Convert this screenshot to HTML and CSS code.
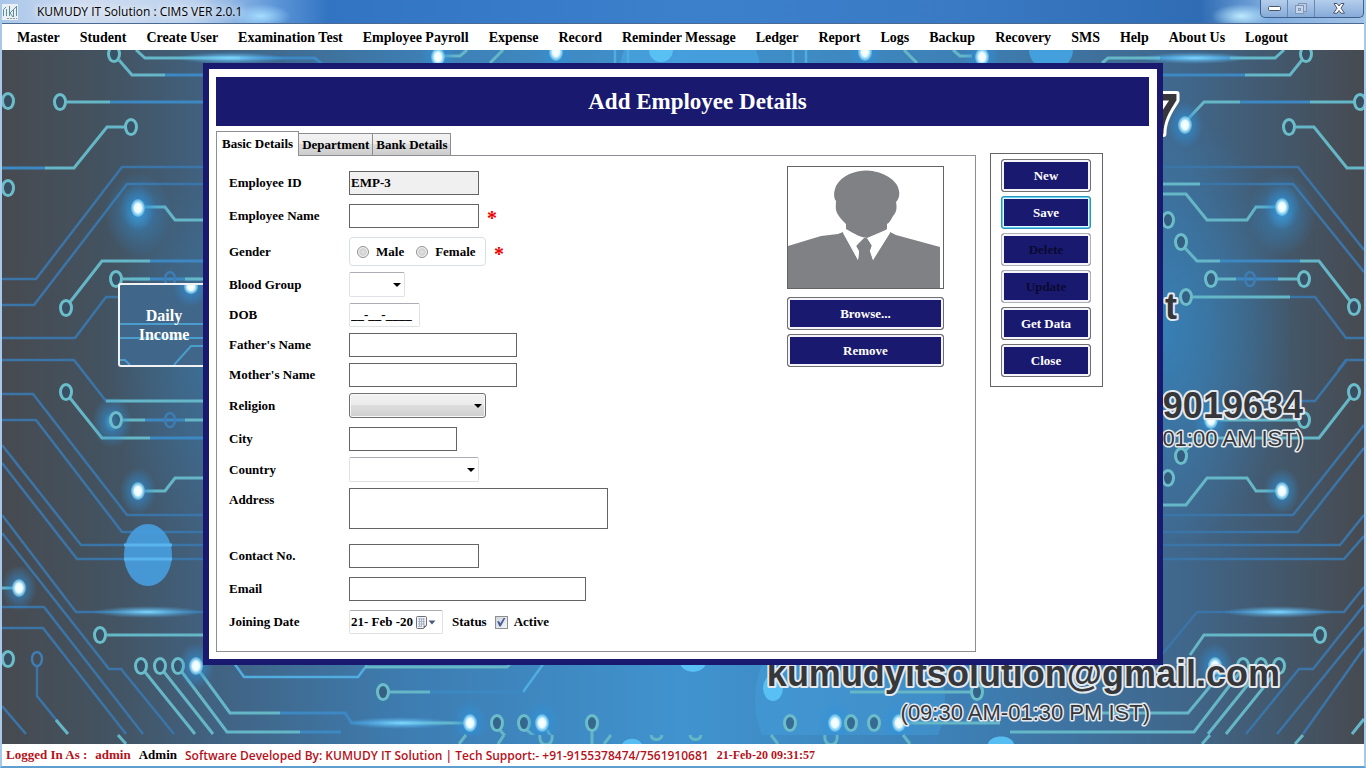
FILE: index.html
```html
<!DOCTYPE html>
<html lang="en">
<head>
    <meta charset="UTF-8">
    <meta name="viewport" content="width=device-width, initial-scale=1.0">
    <title>KUMUDY IT Solution : CIMS VER 2.0.1</title>
    <link rel="stylesheet" href="styles.css">
</head>
<body>
    <header class="titlebar">
        <svg class="app-icon" viewBox="0 0 16 16" width="16" height="16" aria-hidden="true">
            <rect width="16" height="16" fill="#e9eff2"/>
            <path d="M1.5 12V5.500L4 3M4.500 5v7M7.500 2v10M14 3L8 9l3 4M11.500 6v7M14.500 2v10" fill="none" stroke="#5d8f9c" stroke-width="1"/>
            <path d="M5 14.500h10" stroke="#8a9aa0" stroke-dasharray="2 1"/>
        </svg>
        <span class="window-title">KUMUDY IT Solution : CIMS VER 2.0.1</span>
        <div class="window-buttons">
            <button aria-label="Minimize">
                <svg viewBox="0 0 13 6" width="13" height="6"><rect x=".5" y=".5" width="12" height="4" rx="1" fill="#fff" stroke="#4a5468"/></svg>
            </button>
            <button aria-label="Restore" disabled>
                <svg viewBox="0 0 12 12" width="12" height="12" fill="none" stroke="#8296b4"><rect x="3.500" y=".5" width="8" height="8" fill="#b9cce6"/><rect x=".5" y="2.500" width="8" height="8" fill="#c6d6ea"/><rect x="3.500" y="5.500" width="2" height="2"/></svg>
            </button>
            <button class="close" aria-label="Close window">
                <svg viewBox="0 0 12 11" width="12" height="11"><path d="M1 .5h3l2 2.500 2-2.500h3L8 5.200l3.500 5H8L6 7.500l-2 2.700H.5L4 5.200z" fill="#fff" stroke="#4a5468"/></svg>
            </button>
        </div>
    </header>

    <nav class="menu">
        <a href="#">Master</a>
        <a href="#">Student</a>
        <a href="#">Create User</a>
        <a href="#">Examination Test</a>
        <a href="#">Employee Payroll</a>
        <a href="#">Expense</a>
        <a href="#">Record</a>
        <a href="#">Reminder Message</a>
        <a href="#">Ledger</a>
        <a href="#">Report</a>
        <a href="#">Logs</a>
        <a href="#">Backup</a>
        <a href="#">Recovery</a>
        <a href="#">SMS</a>
        <a href="#">Help</a>
        <a href="#">About Us</a>
        <a href="#">Logout</a>
    </nav>

    <main class="desktop">
        <svg class="wallpaper" viewBox="2 50 1362 694" preserveAspectRatio="xMidYMid slice">
            <defs>
                <linearGradient id="sky" x1="0" x2="1" y1="0" y2="0">
                    <stop offset="0" stop-color="#474a50"/>
                    <stop offset=".08" stop-color="#435361"/>
                    <stop offset=".15" stop-color="#41617f"/>
                    <stop offset=".3" stop-color="#3d7db2"/>
                    <stop offset=".5" stop-color="#4093cf"/>
                    <stop offset=".7" stop-color="#3d80b6"/>
                    <stop offset=".87" stop-color="#40668a"/>
                    <stop offset=".94" stop-color="#43576a"/>
                    <stop offset="1" stop-color="#474a50"/>
                </linearGradient>
                <radialGradient id="side">
                    <stop offset="0" stop-color="#3585be" stop-opacity=".8"/>
                    <stop offset="1" stop-color="#3585be" stop-opacity="0"/>
                </radialGradient>
                <radialGradient id="glow">
                    <stop offset="0" stop-color="#4fb9f5" stop-opacity=".9"/>
                    <stop offset=".4" stop-color="#2f93dc" stop-opacity=".5"/>
                    <stop offset="1" stop-color="#2f93dc" stop-opacity="0"/>
                </radialGradient>
                <radialGradient id="flare">
                    <stop offset="0" stop-color="#7fd6ff"/>
                    <stop offset="1" stop-color="#4fb0ee" stop-opacity="0"/>
                </radialGradient>
                <radialGradient id="lamp">
                    <stop offset="0" stop-color="#fff"/>
                    <stop offset=".5" stop-color="#e8fbff"/>
                    <stop offset="1" stop-color="#72d0f5" stop-opacity=".5"/>
                </radialGradient>
                <g id="ring"><ellipse rx="5.500" ry="7.500" fill="#30506a" fill-opacity=".6" stroke="#6bbdca" stroke-width="3"/></g>
                <g id="dim"><ellipse rx="5" ry="7" fill="none" stroke="#3d7db3" stroke-width="2.500"/></g>
                <g id="light"><ellipse rx="18" ry="23" fill="url(#glow)"/><ellipse rx="7" ry="9" fill="url(#lamp)"/></g>
            </defs>

            <rect x="0" y="50" width="1366" height="694" fill="url(#sky)"/>
            <ellipse cx="215" cy="350" rx="110" ry="190" fill="url(#side)" opacity=".5"/>
            <ellipse cx="1165" cy="330" rx="130" ry="220" fill="url(#side)"/>
            <ellipse cx="690" cy="70" rx="70" ry="60" fill="#4aa7e4" opacity=".6"/>
            <circle cx="850" cy="700" r="95" fill="#45a3e2" opacity=".4"/>

            <g fill="none" stroke="#3b75a8" stroke-width="2.500">
                <path d="M210 167H122L36 279H2M210 184H127L34 305H2M118 297H106L75 338H2M2 360H74L106 401H210"/>
                <path d="M2 394H33L127 515H210M2 420H36L122 532H210M2 445L81 545H210M2 463L77 559H210"/>
                <path d="M2 515L76 612H210M2 533L109 669H121L174 734M2 607H44L143 734M2 628H43L126 734M37 666V696L58 722M2 706L26 734"/>
                <path d="M1160 167H1298L1364 250M1160 184H1293L1364 272M1290 297H1315L1346 338H1364M1338 370L1346 360H1364M1160 401H1315L1346 361"/>
                <path d="M1160 515H1293L1364 425M1160 532H1298L1364 448M1160 545H1340L1364 515M1160 559H1344L1364 536"/>
                <path d="M1160 657L1197 612H1344L1364 587M1364 605L1313 669H1299L1246 734M1364 627L1277 734M1364 648L1303 734"/>
                <path d="M234 663L244 677H358L367 665M523 692L544 663M615 50V63M628 50V63M793 50V63M806 50V63" stroke="#51ace0"/>
            </g>

            <g fill="none" stroke="#3d88c2" stroke-width="3">
                <path d="M240 58H315L322 64M165 75H210M110 102H210M45 168H2M150 261H210M130 279H200M150 438H210M145 420H185"/>
                <path d="M280 713H345L352 723H400M300 732H341M430 692H523M1160 75H1245M1160 58H1230M1240 102H1310M1220 261H1300M1236 279H1278"/>
            </g>

            <g fill="none" stroke="#65b6c6" stroke-width="3">
                <path d="M119 60L132 75H165M136 50L145 58H240M67 102H110M125 127H107L74 168H45M145 207H165L175 220H210M70 302L102 261H150M123 279H150M185 279H210"/>
                <path d="M70 398L102 438H150M106 401H210M123 420H145M185 420H210M145 491H165L175 478H210M2 588H15M107 635H210M56 720L68 734"/>
                <path d="M145 672L195 734M164 672L213 734M182 672L227 732H300M200 672L230 713H280M390 692H430M365 667H507L511 663M400 723H464"/>
                <path d="M1230 58H1275L1284 50M1302 60L1290 75H1245M1188 119L1204 102H1240M1310 102H1354M1296 127H1314L1347 168H1364M1160 184H1200M1160 194H1186L1207 220H1247L1256 207H1276"/>
                <path d="M1185 248L1197 261H1220M1300 261H1319L1350 301M1218 279H1236M1278 279H1298M1193 297H1290M1350 398L1319 438H1197L1185 451M1218 420H1298M1160 505H1186L1207 478H1247L1256 491H1276"/>
                <path d="M1190 655L1204 635H1313M1080 713H1188L1222 672M1010 732H1194L1240 672M1208 734L1258 672M1226 734L1276 672M1352 734L1364 719M850 692H970M905 723H1000"/>
                <path d="M444 56H460L467 50M490 63L503 50M972 56H960L953 50M917 63L904 50M1102 63L1108 58H1160M500 730L505 736M527 730L534 736M592 730V744M547 730L552 738"/>
            </g>

            <ellipse cx="148" cy="612" rx="55" ry="6" fill="url(#flare)"/>
            <ellipse cx="1278" cy="612" rx="55" ry="6" fill="url(#flare)"/>
            <ellipse cx="230" cy="58" rx="55" ry="6" fill="url(#flare)"/>
            <ellipse cx="1195" cy="58" rx="55" ry="6" fill="url(#flare)"/>
            <ellipse cx="400" cy="723" rx="55" ry="6" fill="url(#flare)"/>
            <ellipse cx="148" cy="555" rx="24" ry="31" fill="#479fe0" opacity=".9"/>
            <path d="M124 545H172M124 559H172" stroke="#5bb3ee" stroke-width="3"/>
            <ellipse cx="661" cy="50" rx="12" ry="12" fill="#58c0f3"/>
            <ellipse cx="1051" cy="50" rx="22" ry="20" fill="#43a0dc"/>
            <ellipse cx="693" cy="662" rx="13" ry="10" fill="#58c0f3"/>
            <ellipse cx="773" cy="688" rx="10" ry="13" fill="#58c0f3"/>

            <use href="#ring" x="114" y="54"/><use href="#ring" x="8" y="101"/><use href="#ring" x="60" y="102"/>
            <use href="#ring" x="131" y="127"/><use href="#ring" x="8" y="188"/><use href="#ring" x="66" y="308"/>
            <use href="#ring" x="116" y="279"/><use href="#dim" x="170" y="279"/>
            <use href="#ring" x="66" y="392"/><ellipse cx="112" cy="422" rx="20" ry="26" fill="url(#glow)"/>
            <use href="#ring" x="116" y="420"/><use href="#dim" x="170" y="420"/>
            <use href="#ring" x="100" y="635"/><use href="#ring" x="8" y="659"/><use href="#dim" x="37" y="659"/>
            <use href="#ring" x="141" y="666"/><use href="#ring" x="160" y="666"/><use href="#ring" x="178" y="666"/>
            <ellipse cx="138" cy="214" rx="34" ry="42" fill="url(#glow)" opacity=".7"/>
            <use href="#light" x="138" y="208"/><use href="#light" x="138" y="491"/><use href="#light" x="19" y="588"/><use href="#light" x="196" y="666"/>
            <use href="#ring" x="383" y="692"/><use href="#light" x="470" y="723"/><use href="#ring" x="497" y="723"/><use href="#ring" x="524" y="723"/>
            <use href="#light" x="542" y="723"/><use href="#ring" x="592" y="723"/><use href="#ring" x="790" y="723"/>
            <use href="#light" x="835" y="723"/><use href="#ring" x="851" y="723"/><use href="#ring" x="874" y="723"/><use href="#light" x="899" y="723"/><use href="#ring" x="977" y="692"/>
            <use href="#light" x="438" y="57"/><use href="#light" x="556" y="52"/><use href="#light" x="865" y="52"/><use href="#light" x="982" y="57"/>
            <use href="#ring" x="1306" y="54"/><use href="#ring" x="1360" y="102"/><use href="#ring" x="1289" y="127"/>
            <use href="#ring" x="1168" y="220"/><use href="#ring" x="1181" y="242"/><use href="#ring" x="1211" y="279"/><use href="#dim" x="1250" y="279"/>
            <use href="#ring" x="1304" y="279"/><use href="#ring" x="1186" y="297"/><use href="#ring" x="1354" y="307"/>
            <use href="#ring" x="1354" y="392"/><use href="#ring" x="1304" y="420"/><use href="#ring" x="1181" y="456"/><use href="#ring" x="1168" y="478"/>
            <use href="#ring" x="1320" y="635"/><use href="#ring" x="1243" y="666"/><use href="#ring" x="1261" y="666"/><use href="#ring" x="1279" y="666"/>
            <ellipse cx="1282" cy="214" rx="34" ry="42" fill="url(#glow)" opacity=".7"/>
            <use href="#light" x="1185" y="125"/><use href="#light" x="1282" y="207"/><use href="#light" x="1211" y="420"/><use href="#light" x="1282" y="491"/><use href="#light" x="1215" y="666"/>

            <!-- the image tiles again below this line -->
            <rect x="0" y="735" width="1366" height="9" fill="url(#sky)"/>
            <g fill="none" stroke="#65b6c6" stroke-width="3">
                <path d="M118 735L126 744M466 735L459 744M504 735L498 744M592 735V744M611 735L604 744M771 735L778 744M903 735L910 744M1210 735L1202 744M1303 735L1295 744"/>
                <path d="M540 735C538 748 554 748 552 735M651 735C652 741 661 741 662 735M690 735C691 741 700 741 701 735M825 735C823 748 839 748 837 735"/>
            </g>
            <path d="M622 744C626 737 638 737 642 744M988 744C990 734 1012 734 1014 744" fill="#55bdf2"/>

            <g class="wall-text" text-anchor="end">
                <text class="wall-huge" x="1179" y="134">7</text>
                <text class="wall-big" x="1177" y="319">t</text>
                <text class="wall-big" x="1303" y="418">9019634</text>
                <text class="wall-hours" x="1303" y="446">01:00 AM IST)</text>
                <text class="wall-big" x="1280" y="686">kumudyitsolution@gmail.com</text>
                <text class="wall-hours" x="1150" y="720">(09:30 AM-01:30 PM IST)</text>
            </g>
        </svg>

        <button class="tile">
            <svg viewBox="0 0 90 80" preserveAspectRatio="xMinYMin slice" aria-hidden="true">
                <ellipse cx="71" cy="2" rx="18" ry="20" fill="url(#glow)"/>
                <ellipse cx="71" cy="2" rx="7" ry="7" fill="url(#lamp)"/>
                <path d="M0 39H90M0 53H90M54 80L71 61H90M0 75H5L10 80" fill="none" stroke="#4a9ccc" stroke-width="2"/>
            </svg>
            <span>Daily<br>Income</span>
        </button>

        <section class="dialog">
            <h1>Add Employee Details</h1>
            <div class="dialog-body">
                <div class="tabs">
                    <div class="tab-list" role="tablist">
                        <button class="tab active" role="tab" aria-selected="true">Basic Details</button>
                        <button class="tab" role="tab">Department</button>
                        <button class="tab" role="tab">Bank Details</button>
                    </div>
                    <div class="tab-panel" role="tabpanel">
                        <form class="fields">
                            <div class="row">
                                <label for="empId">Employee ID</label>
                                <input class="w-medium" type="text" id="empId" value="EMP-3" readonly>
                            </div>
                            <div class="row spaced">
                                <label for="empName">Employee Name</label>
                                <input class="w-medium" type="text" id="empName">
                                <span class="required">*</span>
                            </div>
                            <div class="row spaced">
                                <span class="label" id="genderLabel">Gender</span>
                                <div class="gender" role="radiogroup" aria-labelledby="genderLabel">
                                    <label><input type="radio" name="gender">Male</label>
                                    <label><input type="radio" name="gender">Female</label>
                                </div>
                                <span class="required">*</span>
                            </div>
                            <div class="row">
                                <label for="blood">Blood Group</label>
                                <span class="select w-tiny"><select id="blood"><option></option></select></span>
                            </div>
                            <div class="row">
                                <label for="dob">DOB</label>
                                <input class="soft dob" type="text" id="dob" value="__-__-____">
                            </div>
                            <div class="row">
                                <label for="father">Father's Name</label>
                                <input class="w-name" type="text" id="father">
                            </div>
                            <div class="row">
                                <label for="mother">Mother's Name</label>
                                <input class="w-name" type="text" id="mother">
                            </div>
                            <div class="row">
                                <label for="religion">Religion</label>
                                <span class="select raised"><select id="religion"><option></option></select></span>
                            </div>
                            <div class="row spaced">
                                <label for="city">City</label>
                                <input class="w-city" type="text" id="city">
                            </div>
                            <div class="row">
                                <label for="country">Country</label>
                                <span class="select w-medium"><select id="country"><option></option></select></span>
                            </div>
                            <div class="row top">
                                <label for="address">Address</label>
                                <textarea id="address"></textarea>
                            </div>
                            <div class="row after-text">
                                <label for="contact">Contact No.</label>
                                <input class="w-medium" type="text" id="contact">
                            </div>
                            <div class="row spaced">
                                <label for="email">Email</label>
                                <input class="w-email" type="text" id="email">
                            </div>
                            <div class="row spaced">
                                <label for="joining">Joining Date</label>
                                <div class="date">
                                    <input type="text" id="joining" value="21- Feb -20">
                                    <button type="button" aria-label="Pick a date">
                                        <svg viewBox="0 0 20 13" width="20" height="13">
                                            <path d="M.5 1.500a1 1 0 0 1 1-1h8a1 1 0 0 1 1 1v8l-3 3h-6a1 1 0 0 1-1-1z" fill="#f2f4f8" stroke="#6f6f75"/>
                                            <path d="M2 3h7M2 5.500h7M2 8h7M2 10.500h4M3.500 2v9M5.500 2v9M7.500 2v7" stroke="#a9b4c8" fill="none"/>
                                            <path d="M7.500 12.500v-3h3z" fill="#6f6f75"/>
                                            <path d="M12.500 4.500h7L16 8.500z" fill="#4a5a80"/>
                                        </svg>
                                    </button>
                                </div>
                                <span class="status">Status</span>
                                <label class="check"><input type="checkbox" checked>Active</label>
                            </div>
                        </form>
                        <div class="photo">
                            <svg viewBox="0 0 155 121" role="img" aria-label="Employee photo">
                                <rect width="155" height="121" fill="#fff"/>
                                <path d="M79 3.500C94 4 110 13 111 24C112 29 110 33 108 35C109 40 109 45 105 49C103 53 101 56 99 57L99 62C94 67 85 69 80 71C74 71 66 67 58 62L58 57C54 53 51 50 49 46C47 42 48 38 48 34C45 30 46 24 48 19C54 8 66 4 79 3.500Z" fill="#808184"/>
                                <path d="M0 79L33 69L50 67L55 65L70 93L71 85L68 79L76 71H79L84 79L82 84L85 93L102 65L108 68L152 80V121H0Z" fill="#808184"/>
                                <path d="M57 62L74 71L68 79L71 84L70 93L55 66ZM100 62L79 71L84 78L82 84L85 93L102 66Z" fill="#fff"/>
                            </svg>
                            <button class="btn">Browse...</button>
                            <button class="btn">Remove</button>
                        </div>
                    </div>
                </div>
                <div class="actions">
                    <button class="btn">New</button>
                    <button class="btn default">Save</button>
                    <button class="btn" disabled>Delete</button>
                    <button class="btn" disabled>Update</button>
                    <button class="btn">Get Data</button>
                    <button class="btn">Close</button>
                </div>
            </div>
        </section>
    </main>

    <footer class="statusbar">
        <span>Logged In As :</span>
        <span>admin</span>
        <span class="role">Admin</span>
        <span class="credit">Software Developed By: KUMUDY IT Solution | Tech Support:- +91-9155378474/7561910681</span>
        <span class="clock">21-Feb-20 09:31:57</span>
    </footer>
</body>
</html>
```
FILE: styles.css
```css
* {
    box-sizing: border-box;
}
body {
    margin: 0;
    height: 100vh;
    display: flex;
    flex-direction: column;
    border: solid #3f6f9f;
    border-width: 0 2px 2px;
    border-color: #3f6f9f #a8c8e8 #5f9fd0;
    font-family: "Liberation Serif", serif;
    font-size: 13px;
    font-weight: bold;
    color: #000;
}
button, input, select, textarea {
    font: inherit;
    margin: 0;
}

/* title bar */
.titlebar {
    height: 24px;
    flex: none;
    display: flex;
    align-items: center;
    border-bottom: 1px solid #4a6a94;
    background:
        radial-gradient(ellipse 30px 12px at 19% 70%, #a5dcff, transparent),
        radial-gradient(ellipse 30px 12px at 91% 70%, #bdeaff, transparent),
        linear-gradient(to right, #a9c6ea 0, #cfdcf0 6%, #bcd2ee 14%, #5e97d8 20%, #3274c2 24%, #3c80cc 50%, #3a7ac4 70%, #2f6cb4 88%, #7faee0 93%, #a3c2e6 100%);
}
.app-icon {
    margin-right: 19px;
}
.window-title {
    flex: 1;
    font-family: "Open Sans", sans-serif;
    font-size: 12px;
    font-weight: normal;
    text-shadow: 0 0 6px #fff, 0 0 10px #fff;
}
.window-buttons {
    display: flex;
    align-self: flex-start;
    height: 18px;
    border: 1px solid #3f5f8c;
    border-top: 0;
    border-radius: 0 0 5px 5px;
    background: linear-gradient(#b4cdec, #86abd8);
}
.window-buttons button {
    width: 27px;
    padding: 0;
    display: flex;
    align-items: center;
    justify-content: center;
    border: 0;
    border-right: 1px solid #6887b0;
    background: none;
}
.window-buttons .close {
    width: 48px;
    border-right: 0;
}

/* main menu */
.menu {
    height: 26px;
    flex: none;
    display: flex;
    align-items: center;
    gap: 20px;
    padding: 2px 0 0 15px;
    background: #fff;
    font-size: 14px;
}
.menu a {
    color: #000;
    text-decoration: none;
    white-space: nowrap;
}

/* desktop: wallpaper, tile and dialog share one grid cell */
.desktop {
    flex: 1;
    min-height: 0;
    display: grid;
    grid-template: minmax(0, 1fr) / minmax(0, 1fr);
    background: #40668a;
}
.desktop > * {
    grid-area: 1 / 1;
}
.wallpaper {
    width: 100%;
    height: 100%;
}
.wall-text {
    font-family: "Liberation Sans", sans-serif;
    fill: #36373b;
    stroke: #e4e9ee;
    stroke-width: 4px;
    stroke-linejoin: round;
    paint-order: stroke;
}
.wall-big {
    font-size: 36px;
    font-weight: bold;
}
.wall-huge {
    font-size: 58px;
    font-weight: bold;
    stroke: #fff;
    stroke-width: 6px;
}
.wall-hours {
    font-size: 22px;
    font-weight: normal;
    stroke-width: 3px;
}
.tile {
    width: 92px;
    height: 84px;
    margin: 233px 0 0 116px;
    padding: 0;
    display: grid;
    border: 2px solid #f0f2f4;
    border-radius: 3px;
    background: #40668a;
    color: #fff;
    font-size: 16px;
    line-height: 19px;
}
.tile > * {
    grid-area: 1 / 1;
    align-self: center;
}
.tile svg {
    width: 100%;
    height: 80px;
}

/* dialog */
.dialog {
    align-self: start;
    margin: 13px 201px 0;
    border: 6px solid #191970;
    background: #fff;
    padding: 8px 8px 7px 7px;
    z-index: 1;
}
.dialog h1 {
    margin: 0 0 5px;
    padding-left: 30px;
    font-size: 23px;
    line-height: 49px;
    text-align: center;
    color: #fff;
    background: #191970;
}
.dialog-body {
    display: flex;
    align-items: flex-start;
    gap: 14px;
    padding-right: 46px;
}
.tabs {
    flex: 1;
}
.tab-list {
    display: flex;
    align-items: flex-end;
}
.tab {
    height: 22px;
    padding: 0 3px;
    border: 1px solid #8c8e94;
    border-left: 0;
    border-bottom: 0;
    background: linear-gradient(#f3f3f3, #ebebeb 50%, #dddddd 50%, #cdcdcd);
}
.tab.active {
    height: 25px;
    margin-bottom: -1px;
    padding: 0 5px;
    border-left: 1px solid #8c8e94;
    background: #fff;
    z-index: 1;
}
.tab-panel {
    display: flex;
    justify-content: space-between;
    border: 1px solid #8c8e94;
    padding: 15px 31px 17px 12px;
}

/* form */
.fields {
    display: flex;
    flex-direction: column;
    gap: 6px;
}
.row {
    display: flex;
    align-items: center;
}
.row.spaced {
    margin-top: 3px;
}
.row.after-text {
    margin-top: 9px;
}
.row.top {
    align-items: flex-start;
    line-height: 24px;
}
.row > label:first-child, .label {
    width: 120px;
}
.fields input[type="text"], textarea {
    height: 24px;
    padding: 0 1px;
    border: 1px solid #646464;
    background: #fff;
    color: #000;
}
.fields input[readonly] {
    background: #f0f0f0;
}
.w-tiny {
    width: 56px;
}
.w-city {
    width: 108px;
}
.w-medium {
    width: 130px;
}
.w-name {
    width: 168px;
}
.w-email {
    width: 237px;
}
textarea {
    width: 259px;
    height: 41px;
    resize: none;
}
.fields input.soft, .date {
    border: 1px solid #dfe1e4;
    border-top-color: #abadb3;
    border-radius: 2px;
}
.dob {
    width: 71px;
}
.required {
    margin-left: 8px;
    height: 20px;
    font-size: 20px;
    line-height: 24px;
    color: #f00000;
}
.gender {
    width: 137px;
    height: 29px;
    display: flex;
    align-items: center;
    gap: 12px;
    padding-left: 7px;
    border: 1px solid #d5dfe5;
    border-radius: 4px;
}
.gender label, .check {
    display: flex;
    align-items: center;
    gap: 7px;
}
input[type="radio"] {
    appearance: none;
    width: 12px;
    height: 12px;
    border: 1px solid #8e8f8f;
    border-radius: 50%;
    background: radial-gradient(#e4e4e4, #cfcfcf 45%, #f4f4f4 65%);
}
.select {
    display: grid;
}
.select select {
    grid-area: 1 / 1;
    appearance: none;
    width: 100%;
    height: 25px;
    border: 1px solid #dfe1e4;
    border-top-color: #abadb3;
    border-radius: 2px;
    background: #fff;
}
.select::after {
    content: "";
    grid-area: 1 / 1;
    place-self: center end;
    margin-right: 4px;
    border: 4px solid transparent;
    border-top-color: #000;
    border-bottom: 0;
    pointer-events: none;
}
.select.raised {
    width: 137px;
}
.raised select {
    border-color: #707070;
    border-radius: 3px;
    background: linear-gradient(#f2f2f2, #ebebeb 50%, #dddddd 50%, #cfcfcf);
    box-shadow: inset 0 0 0 1px #f8f8f8;
}
.date {
    width: 94px;
    height: 24px;
    display: flex;
    align-items: center;
}
.date input[type="text"] {
    width: 66px;
    height: 20px;
    padding: 0 1px;
    border: 0;
}
.date button {
    display: flex;
    padding: 0;
    border: 0;
    background: none;
}
.status {
    margin: 0 8px 0 9px;
}
.check {
    gap: 6px;
}
.check input {
    appearance: none;
    width: 13px;
    height: 13px;
    border: 1px solid #8e8f8f;
    background: linear-gradient(135deg, #cfd4de, #f4f6f8);
    display: grid;
    place-items: center;
}
.check input:checked::before {
    content: "";
    width: 9px;
    height: 9px;
    background: #4a5f97;
    clip-path: polygon(5% 45%, 25% 40%, 40% 65%, 80% 0, 100% 0, 45% 100%, 30% 100%);
}

/* photo and buttons */
.photo {
    width: 157px;
    margin-top: -5px;
    display: flex;
    flex-direction: column;
    gap: 4px;
}
.photo svg {
    border: 1px solid #646464;
    margin-bottom: 4px;
}
.btn {
    height: 33px;
    padding: 0;
    border: 1px solid #707070;
    border-radius: 3px;
    background: #191970;
    box-shadow: inset 0 0 0 2px #f4f4fa;
    color: #fff;
}
.btn.default {
    border-color: #2c93bd;
    box-shadow: inset 0 0 0 1px #5fd3f2, inset 0 0 0 2px #e6f8fd;
}
.btn:disabled {
    border-color: #adb2b5;
    color: #0a0a30;
}
.actions {
    width: 113px;
    margin-top: 22px;
    padding: 5px 11px 9px 10px;
    display: flex;
    flex-direction: column;
    gap: 4px;
    border: 1px solid #646464;
}

/* status bar */
.statusbar {
    height: 22px;
    flex: none;
    display: flex;
    align-items: center;
    gap: 8px;
    padding-left: 4px;
    background: #fff;
    color: #b5121b;
    white-space: nowrap;
}
.role {
    color: #000;
}
.credit {
    font-family: "Open Sans", sans-serif;
    font-size: 12px;
    font-weight: 600;
}
.clock {
    font-size: 12px;
}
```
